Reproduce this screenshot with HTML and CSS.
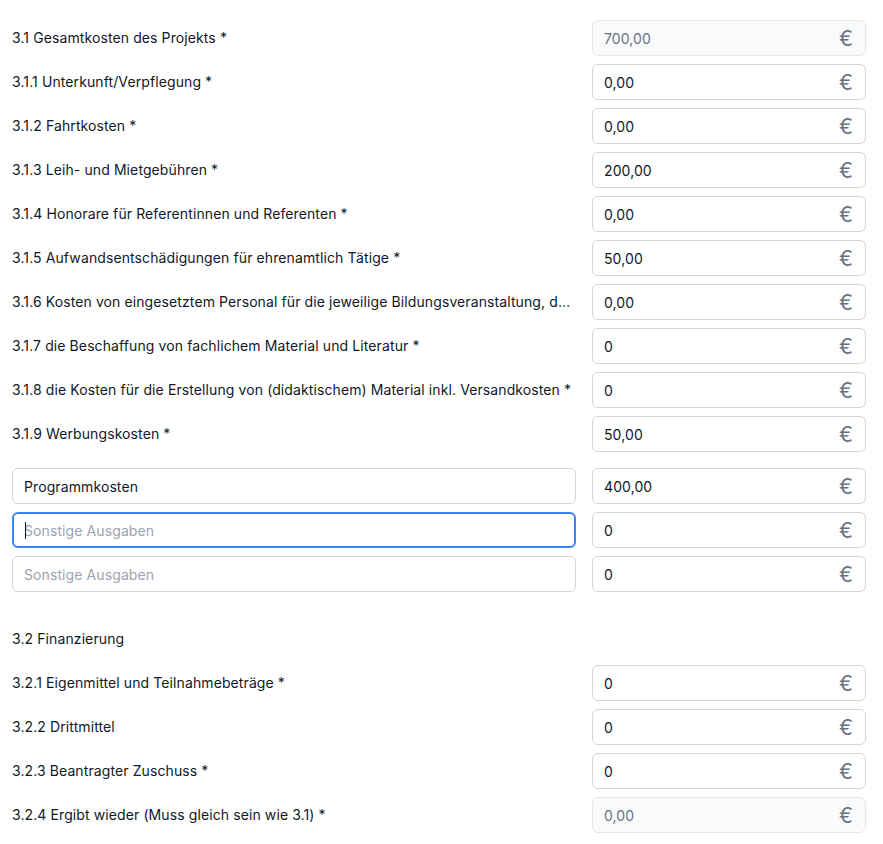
FILE: index.html
```html
<!DOCTYPE html>
<html lang="de">
<head>
<meta charset="utf-8">
<title>Kosten</title>
<link rel="stylesheet" href="styles.css">
</head>
<body>
<form class="form">
  <div class="row">
    <div class="label">3.1 Gesamtkosten des Projekts *</div>
    <div class="field disabled"><input class="input" value="700,00" disabled><span class="euro">€</span></div>
  </div>
  <div class="row">
    <div class="label">3.1.1 Unterkunft/Verpflegung *</div>
    <div class="field"><input class="input" value="0,00"><span class="euro">€</span></div>
  </div>
  <div class="row">
    <div class="label">3.1.2 Fahrtkosten *</div>
    <div class="field"><input class="input" value="0,00"><span class="euro">€</span></div>
  </div>
  <div class="row">
    <div class="label">3.1.3 Leih- und Mietgebühren *</div>
    <div class="field"><input class="input" value="200,00"><span class="euro">€</span></div>
  </div>
  <div class="row">
    <div class="label">3.1.4 Honorare für Referentinnen und Referenten *</div>
    <div class="field"><input class="input" value="0,00"><span class="euro">€</span></div>
  </div>
  <div class="row">
    <div class="label">3.1.5 Aufwandsentschädigungen für ehrenamtlich Tätige *</div>
    <div class="field"><input class="input" value="50,00"><span class="euro">€</span></div>
  </div>
  <div class="row">
    <div class="label">3.1.6 Kosten von eingesetztem Personal für die jeweilige Bildungsveranstaltung, die nicht durch andere Mittel gedeckt sind *</div>
    <div class="field"><input class="input" value="0,00"><span class="euro">€</span></div>
  </div>
  <div class="row">
    <div class="label">3.1.7 die Beschaffung von fachlichem Material und Literatur *</div>
    <div class="field"><input class="input" value="0"><span class="euro">€</span></div>
  </div>
  <div class="row">
    <div class="label">3.1.8 die Kosten für die Erstellung von (didaktischem) Material inkl. Versandkosten *</div>
    <div class="field"><input class="input" value="0"><span class="euro">€</span></div>
  </div>
  <div class="row">
    <div class="label">3.1.9 Werbungskosten *</div>
    <div class="field"><input class="input" value="50,00"><span class="euro">€</span></div>
  </div>

  <div class="custom">
    <div class="row">
      <div class="field"><input class="input" value="Programmkosten"></div>
      <div class="field"><input class="input" value="400,00"><span class="euro">€</span></div>
    </div>
    <div class="row">
      <div class="field focused"><span class="caret"></span><input class="input" placeholder="Sonstige Ausgaben"></div>
      <div class="field"><input class="input" value="0"><span class="euro">€</span></div>
    </div>
    <div class="row">
      <div class="field"><input class="input" placeholder="Sonstige Ausgaben"></div>
      <div class="field"><input class="input" value="0"><span class="euro">€</span></div>
    </div>
  </div>

  <div class="section-title">3.2 Finanzierung</div>
  <div class="row">
    <div class="label">3.2.1 Eigenmittel und Teilnahmebeträge *</div>
    <div class="field"><input class="input" value="0"><span class="euro">€</span></div>
  </div>
  <div class="row">
    <div class="label">3.2.2 Drittmittel</div>
    <div class="field"><input class="input" value="0"><span class="euro">€</span></div>
  </div>
  <div class="row">
    <div class="label">3.2.3 Beantragter Zuschuss *</div>
    <div class="field"><input class="input" value="0"><span class="euro">€</span></div>
  </div>
  <div class="row">
    <div class="label">3.2.4 Ergibt wieder (Muss gleich sein wie 3.1) *</div>
    <div class="field disabled"><input class="input" value="0,00" disabled><span class="euro">€</span></div>
  </div>
</form>
</body>
</html>
```

FILE: styles.css
```css
* { box-sizing: border-box; }

html, body {
  margin: 0;
  background: #ffffff;
}

body {
  font-family: Inter, "Noto Sans", sans-serif;
  font-size: 14px;
  letter-spacing: 0.1px;
  color: #111827;
}

.form {
  padding: 20px 17px 0 12px;
  display: flex;
  flex-direction: column;
  gap: 8px;
}

.row {
  display: grid;
  grid-template-columns: minmax(0, 1fr) 274px;
  column-gap: 16px;
  align-items: center;
  height: 36px;
}

.label {
  white-space: nowrap;
  overflow: hidden;
  text-overflow: ellipsis;
  line-height: 20px;
  padding-right: 4px;
}

.field {
  position: relative;
  display: flex;
  align-items: center;
  height: 36px;
  border: 1px solid #d1d5db;
  border-radius: 6px;
  background: #ffffff;
  padding: 0 12px 0 11px;
}

.input {
  flex: 1;
  min-width: 0;
  border: 0;
  outline: none;
  background: transparent;
  font: inherit;
  letter-spacing: inherit;
  color: #111827;
  padding: 0;
  height: 20px;
}

.input::placeholder {
  color: #9ca3af;
}

.euro {
  font-size: 21px;
  color: #6b7280;
  line-height: 1;
  margin-left: 8px;
}

.field.disabled {
  background: #f9fafb;
  border-color: #e5e7eb;
}

.field.disabled .input {
  color: #6b7280;
}

.field.focused {
  border: 2px solid #3b82f6;
  padding-left: 10px;
}

.caret {
  position: absolute;
  left: 11px;
  top: 8px;
  width: 1px;
  height: 17px;
  background: #111827;
}

.custom {
  margin-top: 8px;
  display: flex;
  flex-direction: column;
  gap: 8px;
}

.section-title {
  margin-top: 21px;
  height: 36px;
  line-height: 36px;
}
```
